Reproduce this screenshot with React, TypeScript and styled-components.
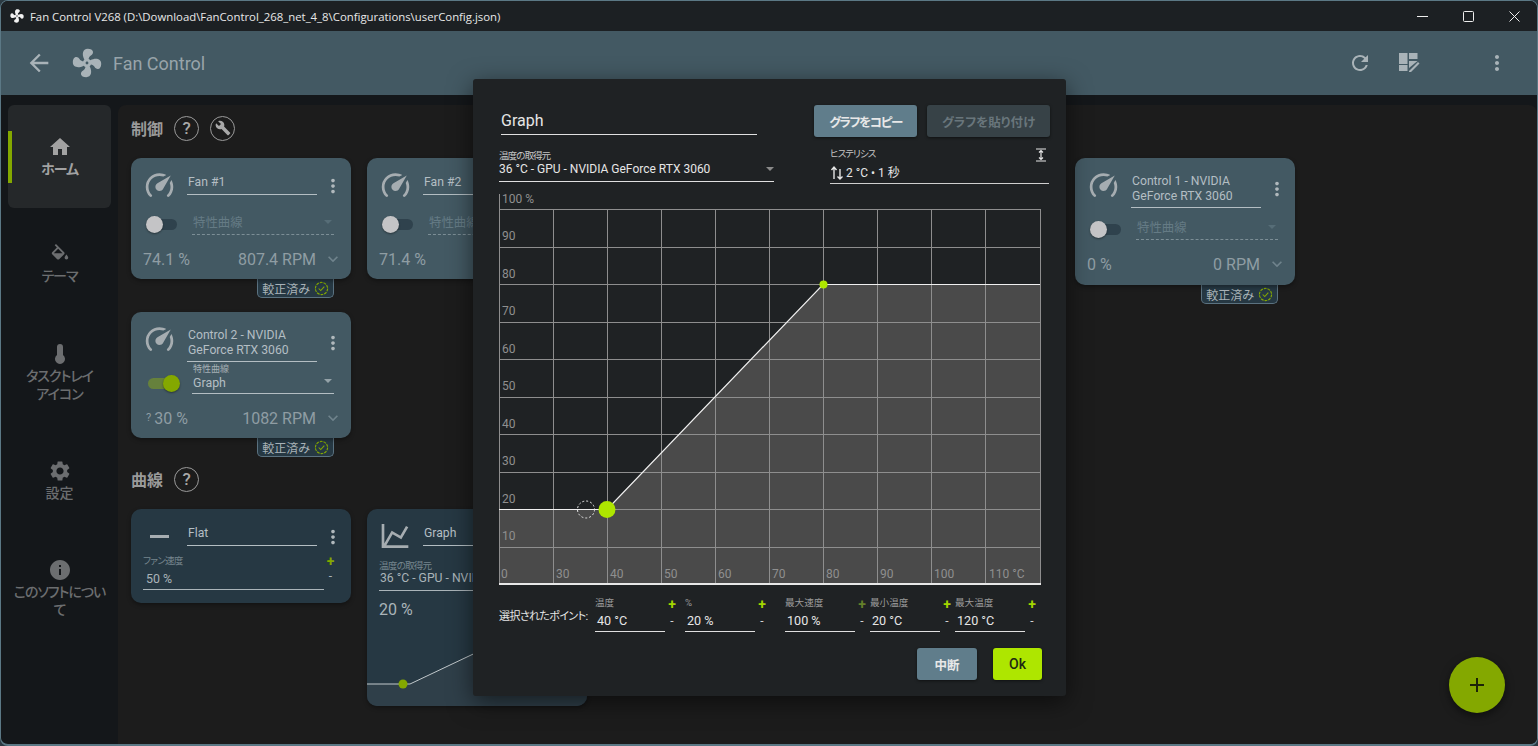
import React from 'react';
import styled, { createGlobalStyle } from 'styled-components';
import { MdArrowBack, MdBuild, MdExpandMore, MdHome, MdInfo, MdMoreVert, MdRefresh, MdSettings } from 'react-icons/md';

const FAN =
  'M12,11A1,1 0 0,0 11,12A1,1 0 0,0 12,13A1,1 0 0,0 13,12A1,1 0 0,0 12,11M12.5,2C17,2 17.11,5.57 14.75,6.75C13.76,7.24 13.32,8.29 13.13,9.22C13.61,9.42 14.03,9.73 14.35,10.13C18.05,8.13 22.03,8.92 22.03,12.5C22.03,17 18.46,17.1 17.28,14.73C16.78,13.74 15.72,13.3 14.79,13.11C14.59,13.59 14.28,14 13.88,14.34C15.87,18.03 15.08,22 11.5,22C7,22 6.91,18.42 9.27,17.24C10.25,16.75 10.69,15.71 10.89,14.79C10.4,14.59 9.97,14.27 9.65,13.87C5.96,15.85 2,15.07 2,11.5C2,7 5.56,6.89 6.74,9.26C7.24,10.25 8.29,10.68 9.22,10.87C9.41,10.39 9.73,9.97 10.14,9.65C8.15,5.96 8.94,2 12.5,2Z';
const GAUGE =
  'M12,16A3,3 0 0,1 9,13C9,11.88 9.61,10.9 10.5,10.39L20.21,4.77L14.68,14.35C14.18,15.33 13.17,16 12,16M12,3C13.81,3 15.5,3.5 16.97,4.32L14.87,5.53C14,5.19 13,5 12,5A8,8 0 0,0 4,13C4,15.21 4.89,17.21 6.34,18.65H6.35C6.74,19.04 6.74,19.67 6.35,20.06C5.96,20.45 5.32,20.45 4.93,20.07V20.07C3.12,18.26 2,15.76 2,13A10,10 0 0,1 12,3M22,13C22,15.76 20.88,18.26 19.07,20.07V20.07C18.68,20.45 18.05,20.45 17.66,20.06C17.27,19.67 17.27,19.04 17.66,18.65V18.65C19.11,17.2 20,15.21 20,13C20,12 19.81,11 19.46,10.1L20.67,8C21.5,9.5 22,11.18 22,13Z';
const CHART_LINE = 'M16,11.78L20.24,4.45L21.97,5.45L16.74,14.5L10.23,10.75L5.46,19H22V21H2V3H4V17.54L9.5,8L16,11.78Z';
const THERMO = 'M15 13V5A3 3 0 0 0 9 5V13A5 5 0 1 0 15 13Z';
const BUCKET =
  'M19,11.5C19,11.5 17,13.67 17,15A2,2 0 0,0 19,17A2,2 0 0,0 21,15C21,13.67 19,11.5 19,11.5M5.21,10L10,5.21L14.79,10M16.56,8.94L7.62,0L6.21,1.41L8.59,3.79L3.44,8.94C2.85,9.5 2.85,10.47 3.44,11.06L8.94,16.56C9.23,16.85 9.62,17 10,17C10.38,17 10.77,16.85 11.06,16.56L16.56,11.06C17.15,10.47 17.15,9.5 16.56,8.94Z';

const FONT = `Roboto, "Noto Sans CJK JP", sans-serif`;

const GlobalStyle = createGlobalStyle`
  html, body {
    margin: 0;
    padding: 0;
    background: #2c3a42;
    overflow: hidden;
  }
  * { box-sizing: border-box; }
`;

const Icon: React.FC<{ d: string; size: number; color?: string }> = ({ d, size, color = 'currentColor' }) => (
  <svg width={size} height={size} viewBox="0 0 24 24" fill={color}>
    <path d={d} />
  </svg>
);

const Window = styled.div`
  position: relative;
  width: 1538px;
  height: 746px;
  display: flex;
  flex-direction: column;
  overflow: hidden;
  background: #14171a;
  border: 1px solid #5b7885;
  border-bottom-width: 2px;
  border-radius: 8px;
  font-family: ${FONT};
  font-feature-settings: 'palt';
`;

const TitleBar = styled.div`
  height: 30px;
  flex: none;
  display: flex;
  align-items: center;
  padding-left: 8px;
  background: #1c2023;
  color: #e8e8e8;
`;

const TitleText = styled.span`
  margin-left: 5px;
  font-family: "Open Sans", "Noto Sans", sans-serif;
  font-size: 11.37px;
  white-space: nowrap;
`;

const WindowButtons = styled.div`
  margin-left: auto;
  display: flex;
`;

const WindowButton = styled.div`
  width: 46px;
  height: 30px;
  display: flex;
  align-items: center;
  justify-content: center;
`;

const AppBar = styled.header`
  height: 64px;
  flex: none;
  display: flex;
  align-items: center;
  padding: 0 28px 0 24px;
  background: #435963;
  color: #a9b3b8;
`;

const AppTitle = styled.span`
  margin-left: 9px;
  font-size: 18px;
  color: #98a4aa;
`;

const LogoSlot = styled.span`
  display: flex;
  margin-left: 17px;
`;

const BarActions = styled.div`
  margin-left: auto;
  display: flex;
  align-items: center;
  color: #a9b3b8;
`;

const BarSpacer = styled.div<{ $w: number }>`
  width: ${p => p.$w}px;
`;

const Body = styled.div`
  flex: 1;
  min-height: 0;
  display: flex;
`;

const Sidebar = styled.nav`
  width: 117px;
  flex: none;
  padding: 10px 7px 0;
  display: flex;
  flex-direction: column;
  gap: 5px;
`;

const NavItem = styled.div<{ $active?: boolean; $kanji?: boolean }>`
  position: relative;
  height: 103px;
  display: flex;
  flex-direction: column;
  align-items: center;
  justify-content: center;
  text-align: center;
  border-radius: 6px;
  font-size: 14px;
  line-height: 18px;
  letter-spacing: ${p => (p.$kanji ? 0 : -1)}px;
  font-weight: ${p => (p.$active ? 700 : 500)};
  background: ${p => (p.$active ? '#25282a' : 'transparent')};
  color: ${p => (p.$active ? '#a2a2a2' : '#6c6e70')};

  svg {
    margin-bottom: 1px;
  }

  &::before {
    content: '';
    display: ${p => (p.$active ? 'block' : 'none')};
    position: absolute;
    left: 0;
    top: 26px;
    width: 4px;
    height: 52px;
    background: #84a800;
  }
`;

const Main = styled.main`
  flex: 1;
  margin-top: 10px;
  padding: 9px 0 0 13px;
  background: #1c1c1c;
  border-radius: 8px 8px 0 0;
`;

const SectionHead = styled.div`
  height: 28px;
  display: flex;
  align-items: center;
  gap: 11px;
  color: #9a9a9a;
  font-size: 16px;
  font-weight: 700;
`;

const CircleButton = styled.span`
  width: 25px;
  height: 25px;
  border: 1.5px solid #9a9a9a;
  border-radius: 50%;
  display: flex;
  align-items: center;
  justify-content: center;
  font-size: 17px;
  font-weight: 500;
  color: #a8a8a8;
`;

const CardGrid = styled.div`
  display: grid;
  grid-template-columns: repeat(5, 220px);
  column-gap: 16px;
  margin-top: 16px;
`;

const CardSlot = styled.div<{ $col?: number }>`
  display: flex;
  flex-direction: column;
  grid-column: ${p => p.$col ?? 'auto'};
  margin-bottom: 8px;
`;

const Card = styled.div<{ $blue?: boolean; $height: number }>`
  position: relative;
  height: ${p => p.$height}px;
  padding: 0 14px;
  overflow: hidden;
  border-radius: 10px;
  background: ${p => (p.$blue ? '#263843' : '#435963')};
  box-shadow: 0 2px 4px rgba(0, 0, 0, 0.35);
  color: #aab4b9;
`;

const CardHead = styled.div<{ $height: number }>`
  height: ${p => p.$height}px;
  display: flex;
`;

const CardIcon = styled.div`
  width: 41px;
  margin-left: -2px;
  padding-top: 11px;
  flex: none;
  color: #a6adb1;
`;

const NameBox = styled.div<{ $single?: boolean }>`
  width: 130px;
  flex: none;
  margin-left: 3px;
  padding: 0 0 ${p => (p.$single ? 4 : 3)}px 1px;
  display: flex;
  flex-direction: column;
  justify-content: flex-end;
  font-size: 12.2px;
  line-height: 15px;
  border-bottom: 1px solid #b4bec3;
  color: #b4bec3;
`;

const Menu = styled.div<{ $tall?: boolean }>`
  flex: none;
  margin: ${p => (p.$tall ? 20 : 17)}px 0 0 5px;
  color: #b0b8bc;
  line-height: 0;
`;

const ToggleRow = styled.div<{ $tall?: boolean }>`
  height: 44px;
  margin-top: ${p => (p.$tall ? -1 : 7)}px;
  display: flex;
  align-items: center;
`;

const Toggle = styled.div<{ $on?: boolean }>`
  position: relative;
  flex: none;
  width: 31px;
  height: 11px;
  margin-left: ${p => (p.$on ? 3 : 1)}px;
  border-radius: 6px;
  background: ${p => (p.$on ? '#66813c' : '#2f424d')};

  &::after {
    content: '';
    position: absolute;
    top: -3px;
    left: ${p => (p.$on ? 15 : 0)}px;
    width: 17px;
    height: 17px;
    border-radius: 50%;
    background: ${p => (p.$on ? '#84a800' : '#c4c4c6')};
    box-shadow: 0 1px 2px rgba(0, 0, 0, 0.4);
  }
`;

const SelectBox = styled.div<{ $on?: boolean }>`
  position: relative;
  width: 142px;
  flex: none;
  height: ${p => (p.$on ? 32 : 26)}px;
  margin: ${p => (p.$on ? -10 : -4)}px 0 0 ${p => (p.$on ? 13 : 15)}px;
  padding: 0 0 3px 1px;
  display: flex;
  flex-direction: column;
  justify-content: flex-end;
  border-bottom: 1px ${p => (p.$on ? 'solid #b4bec3' : 'dashed #7c8e96')};
  font-size: 12.4px;
  color: ${p => (p.$on ? '#b4bec3' : '#657b85')};
`;

const SelectCaption = styled.span`
  font-size: 9px;
  line-height: 10px;
  margin-bottom: 1px;
  color: #a4afb4;
`;

const SelectArrow = styled.span<{ $dim?: boolean }>`
  position: absolute;
  right: 2px;
  bottom: 10px;
  width: 0;
  height: 0;
  border-left: 4px solid transparent;
  border-right: 4px solid transparent;
  border-top: 4px solid ${p => (p.$dim ? '#566d77' : '#94a2a8')};
`;

const ValueRow = styled.div`
  display: flex;
  align-items: center;
  height: 20px;
  font-size: 16px;
  color: #8f9da3;
  margin: 3px -6px 0 -2px;
`;

const Rpm = styled.span`
  margin-left: auto;
`;

const Chevron = styled.span`
  display: flex;
  margin-left: 7px;
  color: #6f838c;
`;

const Question = styled.sup`
  font-size: 11px;
  line-height: 0;
  margin-right: 3px;
  margin-left: 3px;
`;

const Badge = styled.div`
  align-self: flex-end;
  height: 19px;
  margin-right: 17px;
  padding: 0 4px;
  display: flex;
  align-items: center;
  gap: 4px;
  font-size: 12px;
  color: #aab4b9;
  background: #263843;
  border: 1px solid #5b7280;
  border-top: none;
  border-radius: 0 0 5px 5px;
`;

const FlatBar = styled.div`
  width: 19px;
  height: 3px;
  margin: 15px 0 0 7px;
  background: #a6adb1;
`;

const SmallCaption = styled.div<{ $top: number }>`
  margin: ${p => p.$top}px 0 0 -2px;
  font-size: 9.6px;
  line-height: 11px;
  letter-spacing: -0.8px;
  color: #76868e;
`;

const SpeedRow = styled.div`
  display: flex;
  align-items: flex-end;
  margin: -12px 0 0 -2px;
`;

const SpeedBox = styled.div`
  width: 181px;
  height: 24px;
  padding: 0 0 3px 3px;
  display: flex;
  align-items: flex-end;
  font-size: 12.4px;
  color: #aab4b9;
  border-bottom: 1px solid #aab4b9;
`;

const CardStepper = styled.div`
  flex: 1;
  margin-bottom: 5px;
  display: flex;
  flex-direction: column;
  align-items: center;
  color: #aab4b9;
  font-size: 12px;
  line-height: 17px;
`;

const GreenPlus = styled.span<{ $dim?: boolean }>`
  color: ${p => (p.$dim ? '#64802a' : '#a4d600')};
  font-weight: 700;
  font-size: 14px;
  line-height: 14px;
`;

const DarkPlus = styled(GreenPlus)`
  color: #84a800;
`;

const SourceBox = styled.div`
  height: 20px;
  margin-left: -2px;
  padding-left: 1px;
  border-bottom: 1px solid #aab4b9;
  font-size: 12.2px;
  line-height: 15px;
  white-space: nowrap;
  overflow: hidden;
`;

const BigValue = styled.div`
  margin: 9px 0 0 -2px;
  font-size: 16px;
  line-height: 19px;
`;

const SparkLine = styled.svg`
  position: absolute;
  left: 0;
  bottom: 0;
`;

const Dialog = styled.div`
  position: absolute;
  left: 472px;
  top: 78px;
  width: 593px;
  height: 617px;
  padding: 26px 16px 0 26px;
  background: #1f2224;
  border-radius: 3px;
  box-shadow: 0 6px 24px rgba(0, 0, 0, 0.55);
  color: #e6e6e6;
`;

const DialogHead = styled.div`
  display: flex;
  align-items: flex-start;
`;

const TitleInput = styled.div`
  width: 256px;
  height: 30px;
  margin-left: 2px;
  padding-top: 5px;
  font-size: 16px;
  line-height: 22px;
  border-bottom: 1px solid #e0e0e0;
`;

const DialogButton = styled.div<{ $kind: 'primary' | 'disabled' | 'ok'; $w: number; $spacing?: number }>`
  width: ${p => p.$w}px;
  height: 32px;
  display: flex;
  align-items: center;
  justify-content: center;
  border-radius: 3px;
  font-size: ${p => (p.$kind === 'ok' ? 14 : 12.5)}px;
  letter-spacing: ${p => p.$spacing ?? 0}px;
  font-weight: ${p => (p.$kind === 'ok' ? 500 : 700)};
  background: ${p => (p.$kind === 'ok' ? '#aee600' : p.$kind === 'disabled' ? '#374247' : '#607d8b')};
  color: ${p => (p.$kind === 'ok' ? '#1f2a12' : p.$kind === 'disabled' ? '#69767c' : '#e8e8e8')};
  box-shadow: 0 1px 3px rgba(0, 0, 0, 0.5);
`;

const HeadButtons = styled.div`
  margin-left: auto;
  display: flex;
  gap: 10px;
`;

const SourceRow = styled.div`
  display: flex;
  margin-top: 11px;
`;

const SourceField = styled.div`
  position: relative;
  width: 275px;
  height: 34px;
  padding-top: 2px;
  border-bottom: 1px solid #e0e0e0;
`;

const HysteresisField = styled.div`
  position: relative;
  width: 219px;
  height: 36px;
  margin-left: 56px;
  border-bottom: 1px solid #cfcfcf;
`;

const TinyLabel = styled.div`
  font-size: 9.6px;
  line-height: 11px;
  letter-spacing: -1px;
  color: #c6c6c6;
`;

const FieldValue = styled.div`
  margin-top: 1px;
  font-size: 12px;
  line-height: 15px;
`;

const HysteresisValue = styled.div`
  margin-top: 6px;
  display: flex;
  align-items: center;
  gap: 2px;
  font-size: 12px;
  line-height: 16px;
`;

const DialogArrow = styled.span`
  position: absolute;
  right: 0;
  bottom: 10px;
  width: 0;
  height: 0;
  border-left: 4px solid transparent;
  border-right: 4px solid transparent;
  border-top: 4px solid #8a8a8a;
`;

const FitIcon = styled.span`
  position: absolute;
  right: 2px;
  top: 0;
  line-height: 0;
`;

const ChartSvg = styled.svg`
  display: block;
  margin: 9px 0 0 -1px;
`;

const AxisText = styled.text`
  font-family: ${FONT};
  font-size: 12px;
  fill: #8f8f8f;
`;

const PointsRow = styled.div`
  display: flex;
  align-items: center;
  margin-top: 11px;
`;

const PointsLabel = styled.div`
  width: 96px;
  flex: none;
  font-size: 11px;
  letter-spacing: -0.6px;
  white-space: nowrap;
`;

const PointGrid = styled.div`
  display: grid;
  grid-template-columns: 90px 100px 85px 85px 85px;
`;

const PointField = styled.div`
  display: flex;
`;

const PointInput = styled.div`
  width: 70px;
  height: 35px;
  border-bottom: 1px solid #e0e0e0;
`;

const PointCaption = styled.div`
  font-size: 9.6px;
  line-height: 12px;
  color: #9b9b9b;
`;

const PointValue = styled.div`
  margin-top: 4px;
  padding-left: 2px;
  font-size: 12.6px;
  line-height: 16px;
`;

const PointStepper = styled.div`
  width: 14px;
  display: flex;
  flex-direction: column;
  align-items: center;
  font-size: 12px;
  color: #d0d0d0;
  line-height: 15px;
`;

const PointMinus = styled.span`
  margin-top: 3px;
`;

const DialogFoot = styled.div`
  display: flex;
  justify-content: flex-end;
  gap: 16px;
  margin: 16px 8px 0 0;
`;

const Fab = styled.div`
  position: absolute;
  right: 32px;
  bottom: 31px;
  width: 56px;
  height: 56px;
  border-radius: 50%;
  background: #84a800;
  box-shadow: 0 3px 8px rgba(0, 0, 0, 0.5);
  display: flex;
  align-items: center;
  justify-content: center;
`;

const Check = () => (
  <svg width="15" height="15" viewBox="0 0 16 16" fill="none">
    <circle cx="8" cy="8" r="6.5" stroke="#84a800" strokeWidth="1.2" strokeDasharray="3 1" />
    <path d="M5 8l2.2 2.2L11 6" stroke="#84a800" strokeWidth="1.1" />
  </svg>
);

interface FanCardProps {
  name: React.ReactNode;
  on?: boolean;
  curve?: string;
  percent: string;
  rpm: string;
  question?: boolean;
  height: number;
  tall?: boolean;
}

const FanCard: React.FC<FanCardProps> = ({ name, on, curve, percent, rpm, question, height, tall }) => (
  <>
    <Card $height={height}>
      <CardHead $height={tall ? 50 : 37}>
        <CardIcon>
          <Icon d={GAUGE} size={33} />
        </CardIcon>
        <NameBox $single={!tall}>{name}</NameBox>
        <Menu $tall={tall}>
          <MdMoreVert size={22} />
        </Menu>
      </CardHead>
      <ToggleRow $tall={tall}>
        <Toggle $on={on} />
        <SelectBox $on={on}>
          {on && <SelectCaption>特性曲線</SelectCaption>}
          {curve ?? '特性曲線'}
          <SelectArrow $dim={!on} />
        </SelectBox>
      </ToggleRow>
      <ValueRow>
        {question && <Question>?</Question>}
        {percent}
        <Rpm>{rpm}</Rpm>
        <Chevron>
          <MdExpandMore size={20} />
        </Chevron>
      </ValueRow>
    </Card>
    <Badge>
      較正済み
      <Check />
    </Badge>
  </>
);

const xTicks = [499, 553, 607, 661, 715, 769, 823, 877, 931, 985, 1040];
const yTicks = [209, 247, 284, 322, 359, 397, 434, 472, 509, 547, 584];
const xLabels = [
  ['0', 501],
  ['30', 556],
  ['40', 610],
  ['50', 664],
  ['60', 718],
  ['70', 772],
  ['80', 826],
  ['90', 880],
  ['100', 934],
  ['110 °C', 989],
] as const;
const yLabels = [
  ['100 %', 203],
  ['90', 240],
  ['80', 278],
  ['70', 315],
  ['60', 353],
  ['50', 390],
  ['40', 428],
  ['30', 465],
  ['20', 503],
  ['10', 540],
] as const;

const Chart = () => (
  <ChartSvg width={545} height={393} viewBox="498 193 545 393">
    <polygon points="499,509 607,509 823,284 1040,284 1040,584 499,584" fill="#4a4a4a" />
    {xTicks.map(x => (
      <line key={x} x1={x + 0.5} x2={x + 0.5} y1={x === 499 ? 194 : 209} y2={584} stroke="#8e8e8e" />
    ))}
    {yTicks.map(y => (
      <line key={y} x1={499} x2={1040} y1={y + 0.5} y2={y + 0.5} stroke="#8e8e8e" />
    ))}
    <polyline points="499,509.5 607,509.5 823,284.5 1040,284.5" fill="none" stroke="#f0f0f0" strokeWidth="1.2" />
    <line x1={499} x2={1041} y1={584} y2={584} stroke="#e8e8e8" strokeWidth="2" />
    {yLabels.map(([t, y]) => (
      <AxisText key={t} x={502} y={y}>
        {t}
      </AxisText>
    ))}
    {xLabels.map(([t, x]) => (
      <AxisText key={t} x={x} y={578}>
        {t}
      </AxisText>
    ))}
    <circle cx={586} cy={509.5} r={8.5} fill="none" stroke="#e8e8e8" strokeDasharray="2 2" />
    <circle cx={607} cy={509.5} r={8.5} fill="#aee600" />
    <circle cx={823.5} cy={284.5} r={4} fill="#aee600" />
  </ChartSvg>
);

const points = [
  { label: '温度', value: '40 °C' },
  { label: '%', value: '20 %' },
  { label: '最大速度', value: '100 %', dim: true },
  { label: '最小温度', value: '20 °C' },
  { label: '最大温度', value: '120 °C' },
];

const App: React.FC = () => (
  <Window>
    <GlobalStyle />
    <TitleBar>
      <Icon d={FAN} size={16} color="#f2f2f2" />
      <TitleText>Fan Control V268 (D:\Download\FanControl_268_net_4_8\Configurations\userConfig.json)</TitleText>
      <WindowButtons>
        <WindowButton>
          <svg width="11" height="11" viewBox="0 0 11 11">
            <line x1="0" x2="11" y1="5.5" y2="5.5" stroke="#eee" />
          </svg>
        </WindowButton>
        <WindowButton>
          <svg width="11" height="11" viewBox="0 0 11 11">
            <rect x="0.5" y="0.5" width="10" height="10" rx="1" fill="none" stroke="#eee" />
          </svg>
        </WindowButton>
        <WindowButton>
          <svg width="11" height="11" viewBox="0 0 11 11">
            <path d="M0.5 0.5l10 10M10.5 0.5l-10 10" stroke="#eee" />
          </svg>
        </WindowButton>
      </WindowButtons>
    </TitleBar>
    <AppBar>
      <MdArrowBack size={28} />
      <LogoSlot>
        <Icon d={FAN} size={34} />
      </LogoSlot>
      <AppTitle>Fan Control</AppTitle>
      <BarActions>
        <MdRefresh size={24} />
        <BarSpacer $w={25} />
        <svg width="24" height="24" viewBox="0 0 24 24" fill="currentColor">
          <rect x="2" y="2" width="8.500" height="11" />
          <rect x="2" y="14" width="8.500" height="6" />
          <rect x="12" y="2" width="8.500" height="6" />
          <path d="M12 10h8.500L12 17zM12 20l9-9 1.500 1.500-8.500 8.500h-2z" />
        </svg>
        <BarSpacer $w={64} />
        <MdMoreVert size={24} />
      </BarActions>
    </AppBar>
    <Body>
      <Sidebar>
        <NavItem $active>
          <MdHome size={24} />
          ホーム
        </NavItem>
        <NavItem>
          <Icon d={BUCKET} size={22} />
          テーマ
        </NavItem>
        <NavItem>
          <Icon d={THERMO} size={24} />
          タスクトレイ
          <br />
          アイコン
        </NavItem>
        <NavItem $kanji>
          <MdSettings size={24} />
          設定
        </NavItem>
        <NavItem>
          <MdInfo size={24} />
          このソフトについ
          <br />て
        </NavItem>
      </Sidebar>
      <Main>
        <SectionHead>
          制御
          <CircleButton>?</CircleButton>
          <CircleButton>
            <MdBuild size={16} />
          </CircleButton>
        </SectionHead>
        <CardGrid>
          <CardSlot>
            <FanCard name="Fan #1" percent="74.1 %" rpm="807.4 RPM" height={121} />
          </CardSlot>
          <CardSlot>
            <FanCard name="Fan #2" percent="71.4 %" rpm="790 RPM" height={121} />
          </CardSlot>
          <CardSlot $col={5}>
            <FanCard
              name={
                <>
                  Control 1 - NVIDIA
                  <br />
                  GeForce RTX 3060
                </>
              }
              percent="0 %"
              rpm="0 RPM"
              height={127}
              tall
            />
          </CardSlot>
          <CardSlot>
            <FanCard
              name={
                <>
                  Control 2 - NVIDIA
                  <br />
                  GeForce RTX 3060
                </>
              }
              on
              curve="Graph"
              question
              percent="30 %"
              rpm="1082 RPM"
              height={126}
              tall
            />
          </CardSlot>
        </CardGrid>
        <SectionHead>
          曲線
          <CircleButton>?</CircleButton>
        </SectionHead>
        <CardGrid>
          <Card $blue $height={94}>
            <CardHead $height={37}>
              <CardIcon>
                <FlatBar />
              </CardIcon>
              <NameBox $single>Flat</NameBox>
              <Menu>
                <MdMoreVert size={22} />
              </Menu>
            </CardHead>
            <SmallCaption $top={9}>ファン速度</SmallCaption>
            <SpeedRow>
              <SpeedBox>50 %</SpeedBox>
              <CardStepper>
                <DarkPlus>+</DarkPlus>
                <span>-</span>
              </CardStepper>
            </SpeedRow>
          </Card>
          <Card $blue $height={197}>
            <CardHead $height={37}>
              <CardIcon>
                <Icon d={CHART_LINE} size={32} />
              </CardIcon>
              <NameBox $single>Graph</NameBox>
            </CardHead>
            <SmallCaption $top={14}>温度の取得元</SmallCaption>
            <SourceBox>36 °C - GPU - NVIDIA GeForce RTX 3060</SourceBox>
            <BigValue>20 %</BigValue>
            <SparkLine width="220" height="100" viewBox="0 0 220 100">
              <polygon points="0,78 43,78 140,32 220,32 220,100 0,100" fill="#2f3f49" />
              <polyline points="0,78 43,78 140,32 220,32" fill="none" stroke="#c2c9cc" />
              <circle cx="36" cy="78" r="4.5" fill="#84a800" />
            </SparkLine>
          </Card>
        </CardGrid>
      </Main>
    </Body>
    <Dialog>
      <DialogHead>
        <TitleInput>Graph</TitleInput>
        <HeadButtons>
          <DialogButton $kind="primary" $w={103} $spacing={-1.4}>
            グラフをコピー
          </DialogButton>
          <DialogButton $kind="disabled" $w={123}>
            グラフを貼り付け
          </DialogButton>
        </HeadButtons>
      </DialogHead>
      <SourceRow>
        <SourceField>
          <TinyLabel>温度の取得元</TinyLabel>
          <FieldValue>36 °C - GPU - NVIDIA GeForce RTX 3060</FieldValue>
          <DialogArrow />
        </SourceField>
        <HysteresisField>
          <TinyLabel>ヒステリシス</TinyLabel>
          <HysteresisValue>
            <svg width="14" height="16" viewBox="0 0 14 16" fill="none" stroke="#e6e6e6" strokeWidth="1.4">
              <path d="M4 14V3M1.500 5L4 2l2.500 3M10 4v10M7.500 11.500L10 14l2.500-2.500" />
            </svg>
            2 °C • 1 秒
          </HysteresisValue>
          <FitIcon>
            <svg width="12" height="14" viewBox="0 0 12 14" fill="none" stroke="#e6e6e6" strokeWidth="1.2">
              <path d="M1 1h10M1 13h10M6 2.500v9M4 4.500l2-2 2 2M4 9.500l2 2 2-2" />
            </svg>
          </FitIcon>
        </HysteresisField>
      </SourceRow>
      <Chart />
      <PointsRow>
        <PointsLabel>選択されたポイント:</PointsLabel>
        <PointGrid>
          {points.map(p => (
            <PointField key={p.label}>
              <PointInput>
                <PointCaption>{p.label}</PointCaption>
                <PointValue>{p.value}</PointValue>
              </PointInput>
              <PointStepper>
                <GreenPlus $dim={p.dim}>+</GreenPlus>
                <PointMinus>-</PointMinus>
              </PointStepper>
            </PointField>
          ))}
        </PointGrid>
      </PointsRow>
      <DialogFoot>
        <DialogButton $kind="primary" $w={60}>
          中断
        </DialogButton>
        <DialogButton $kind="ok" $w={49}>
          Ok
        </DialogButton>
      </DialogFoot>
    </Dialog>
    <Fab>
      <svg width="16" height="16" viewBox="0 0 16 16">
        <path d="M7 1h2v6h6v2H9v6H7V9H1V7h6z" fill="#1c2408" />
      </svg>
    </Fab>
  </Window>
);

export default App;
